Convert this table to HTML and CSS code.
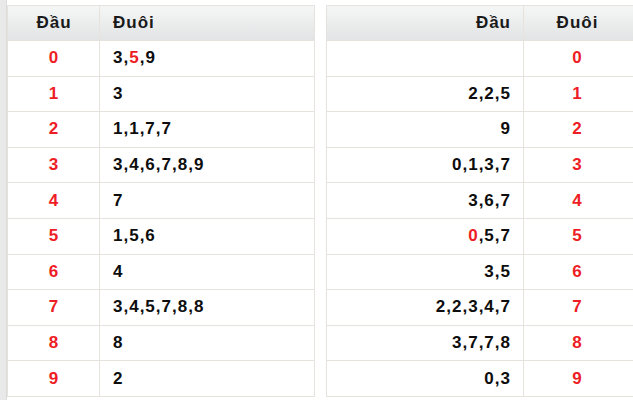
FILE: index.html
```html
<!DOCTYPE html>
<html lang="vi">
<head>
<meta charset="utf-8">
<title>Đầu Đuôi</title>
<link rel="stylesheet" href="styles.css">
</head>
<body>
<div class="page">
  <div class="strip"></div>
  <div class="tbl tbl-left">
    <div class="cell head c1">Đầu</div><div class="cell head c2">Đuôi</div>
    <div class="cell c1 red">0</div><div class="cell c2">3,<span class="red">5</span>,9</div>
    <div class="cell c1 red">1</div><div class="cell c2">3</div>
    <div class="cell c1 red">2</div><div class="cell c2">1,1,7,7</div>
    <div class="cell c1 red">3</div><div class="cell c2">3,4,6,7,8,9</div>
    <div class="cell c1 red">4</div><div class="cell c2">7</div>
    <div class="cell c1 red">5</div><div class="cell c2">1,5,6</div>
    <div class="cell c1 red">6</div><div class="cell c2">4</div>
    <div class="cell c1 red">7</div><div class="cell c2">3,4,5,7,8,8</div>
    <div class="cell c1 red">8</div><div class="cell c2">8</div>
    <div class="cell c1 red">9</div><div class="cell c2">2</div>
  </div>
  <div class="tbl tbl-right">
    <div class="cell head r1">Đầu</div><div class="cell head r2">Đuôi</div>
    <div class="cell r1"></div><div class="cell r2 red">0</div>
    <div class="cell r1">2,2,5</div><div class="cell r2 red">1</div>
    <div class="cell r1">9</div><div class="cell r2 red">2</div>
    <div class="cell r1">0,1,3,7</div><div class="cell r2 red">3</div>
    <div class="cell r1">3,6,7</div><div class="cell r2 red">4</div>
    <div class="cell r1"><span class="red">0</span>,5,7</div><div class="cell r2 red">5</div>
    <div class="cell r1">3,5</div><div class="cell r2 red">6</div>
    <div class="cell r1">2,2,3,4,7</div><div class="cell r2 red">7</div>
    <div class="cell r1">3,7,7,8</div><div class="cell r2 red">8</div>
    <div class="cell r1">0,3</div><div class="cell r2 red">9</div>
  </div>
</div>
</body>
</html>
```
FILE: styles.css
```css
html, body {
  margin: 0;
  padding: 0;
  background: #ffffff;
  overflow: hidden;
}
body {
  width: 633px;
  height: 400px;
  font-family: "Liberation Sans", Arial, sans-serif;
  font-weight: bold;
  font-size: 17px;
  letter-spacing: 1px;
  color: #0d0d0d;
}
.page {
  display: grid;
  grid-template-columns: 7px 308px 310px;
  height: 400px;
}
.strip {
  background: #e9e9e9;
  border-right: 1px solid #dcdcdc;
  box-sizing: border-box;
  height: 400px;
}
.tbl {
  display: grid;
  grid-template-rows: 36px repeat(10, 35.6px);
  margin-top: 5px;
  align-self: start;
}
.tbl-left {
  grid-template-columns: 93px 215px;
}
.tbl-right {
  grid-template-columns: 198px 112px;
  margin-left: 11px;
}
.cell {
  box-sizing: border-box;
  display: flex;
  align-items: center;
  border-bottom: 1px solid #e6e3de;
  background: #ffffff;
}
.head {
  border-top: 1px solid #e6e3de;
  background: linear-gradient(#f5f6f6, #e2e4e5);
  color: #1a1a1a;
}
.c1 {
  justify-content: center;
  border-left: 1px solid #e6e3de;
  border-right: 1px solid #e6e3de;
  padding-left: 1px;
}
.c2 {
  padding-left: 13px;
  border-right: 1px solid #e6e3de;
}
.r1 {
  justify-content: flex-end;
  padding-right: 12px;
  border-left: 1px solid #e6e3de;
  border-right: 1px solid #e6e3de;
}
.r2 {
  justify-content: center;
  padding-right: 4px;
  border-right: 1px solid #e6e3de;
}
.red {
  color: #ee1d25;
}
```
